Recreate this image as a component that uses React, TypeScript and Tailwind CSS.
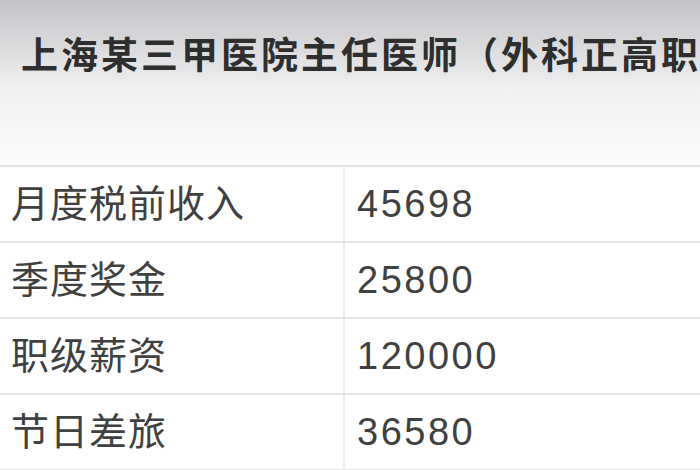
const rows = [
  { label: "月度税前收入", value: "45698" },
  { label: "季度奖金", value: "25800" },
  { label: "职级薪资", value: "120000" },
  { label: "节日差旅", value: "36580" },
];

export default function App() {
  return (
    <div
      className="w-[700px] h-[470px] overflow-hidden bg-white text-[#404040]"
      style={{ fontFamily: '"Liberation Sans", "Noto Sans CJK SC", sans-serif' }}
    >
      <div className="h-[165px] bg-gradient-to-b from-[#c3c3c8] via-[#f1f1f2] via-[55%] to-[#fcfcfc] pt-[36px] pl-[21px]">
        <h1 className="whitespace-nowrap text-[37px] leading-[42px] font-bold tracking-[3px] text-[#2e2e2e]">
          上海某三甲医院主任医师（外科正高职
        </h1>
      </div>
      <div className="border-t-2 border-[#e3e3e3]">
        {rows.map((row) => (
          <div
            key={row.label}
            className="grid grid-cols-[345px_1fr] h-[76px] border-b-2 border-[#e6e6e6]"
          >
            <div className="flex items-center pl-[11px] border-r-2 border-[#ececec] text-[38px] tracking-[1px] whitespace-nowrap">
              {row.label}
            </div>
            <div className="flex items-center pl-[12px] text-[38px] tracking-[2.5px]">
              {row.value}
            </div>
          </div>
        ))}
      </div>
    </div>
  );
}
